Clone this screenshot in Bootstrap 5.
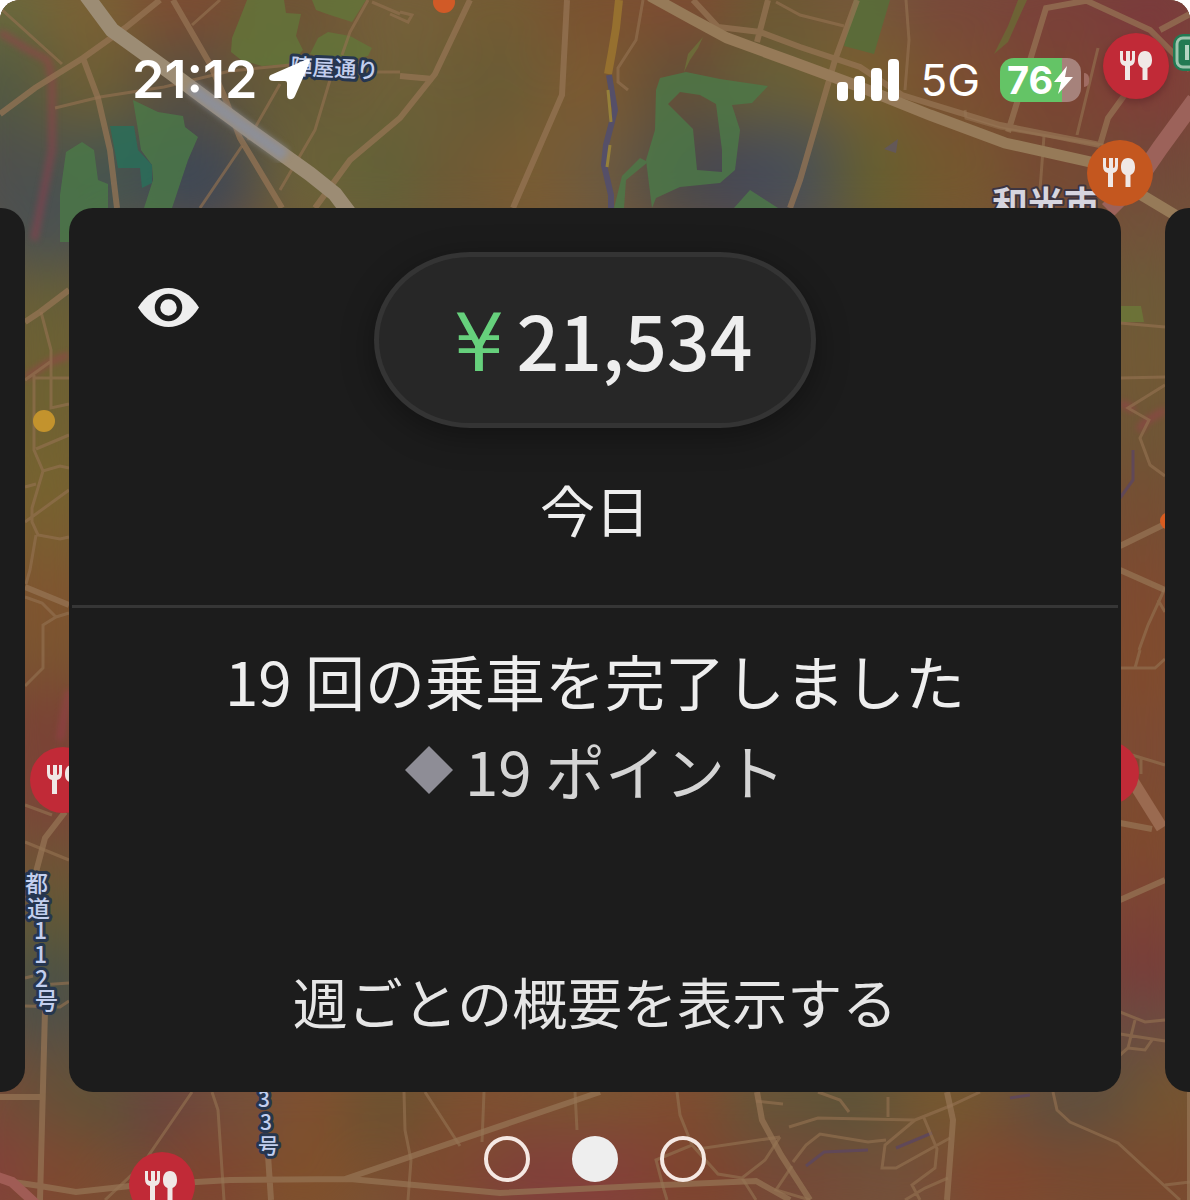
<!DOCTYPE html>
<html lang="ja">
<head>
<meta charset="utf-8">
<meta name="viewport" content="width=device-width, initial-scale=1">
<title>今日の売り上げ</title>
<link rel="stylesheet" href="https://cdn.jsdelivr.net/npm/bootstrap@5.3.0/dist/css/bootstrap.min.css">
<style>
  body { background: #fff; font-family: "Noto Sans CJK JP", sans-serif; }
  .screen { min-height: 1200px; background: #75553a; border-radius: 20px 20px 0 0; isolation: isolate; }
  .map-layer { position: absolute; inset: 0; width: 100%; height: 100%; z-index: -1; }
  .map-text { font-family: "Noto Sans CJK JP", sans-serif; fill: #c3cfee; stroke: #26364f; stroke-width: 6px; stroke-linejoin: round; paint-order: stroke; font-weight: 500; }
  .map-city { font-weight: 700; fill: #d6d5df; stroke: #3e3540; stroke-width: 4px; }
  .status { height: 208px; padding: 50px 101px 0 132px; font-family: Inter, sans-serif; color: #fff; line-height: 60px; }
  .clock { font-size: 52px; font-weight: 600; }
  .clock-group { gap: 12px; }
  .network { font-size: 44px; margin: 0 20px; }
  .battery { width: 81px; height: 44px; border-radius: 14px; line-height: 44px; font-size: 38px; font-weight: 700; padding-left: 7px; background: linear-gradient(90deg, #64c466 76%, #a6827b 76%); }
  .battery-cap { width: 5px; height: 14px; border-radius: 0 7px 7px 0; background: #a06c62; margin-left: 3px; }
  .slides { gap: 44px; }
  .panel { background: #1c1c1c; color: #eee; border-radius: 24px; }
  .peek { flex: 0 0 25px; }
  .peek-start { border-radius: 0 24px 24px 0; }
  .peek-end { border-radius: 24px 0 0 24px; }
  .summary-top { display: grid; grid-template-columns: 1fr auto 1fr; padding-top: 44px; }
  .eye { margin: 36px 0 0 69px; width: 61px; height: 39px; color: #eee; }
  .amount { width: 442px; height: 176px; padding: 2px 0 0 16px; border: 5px solid #343434; border-radius: 96px / 88px; background: #272727; color: #eee; font-size: 75px; font-weight: 500; line-height: 90px; box-shadow: 0 8px 32px rgba(0, 0, 0, .35); }
  .amount-value { gap: 12px; }
  .yen { font-family: "DejaVu Sans", sans-serif; font-size: 80px; font-weight: 400; color: #66d07c; }
  .day { font-size: 55px; line-height: 80px; padding: 40px 0 57px; font-weight: 400; }
  .rule { height: 3px; margin: 0 3px; background: #363636; opacity: 1; border: 0; }
  .trips { font-size: 60px; line-height: 90px; padding-top: 27px; }
  .points { color: #d4d4d4; gap: 12px; }
  .weekly { font-size: 55px; line-height: 80px; color: #e6e6e6; margin: 145px 0 52px; }
  .pager { gap: 42px; padding-top: 44px; }
  .dot { width: 46px; height: 46px; border: 4px solid #f5e8e3; border-radius: 50%; background: transparent; padding: 0; }
  .dot.active { background: #eee; border-color: #eee; }
</style>
</head>
<body>
<main class="screen position-relative overflow-hidden">
  <svg class="map-layer" viewBox="0 0 1190 1200" preserveAspectRatio="xMidYMin slice" aria-hidden="true">
    <defs>
      <filter id="soft" x="-10%" y="-10%" width="120%" height="120%" color-interpolation-filters="sRGB"><feGaussianBlur stdDeviation="28"/></filter>
      <filter id="edge" color-interpolation-filters="sRGB"><feGaussianBlur stdDeviation="3"/></filter>
      <g id="cutlery">
        <path d="M-15 -15v8q0 6 5 7v14h5v-14q5-1 5-7v-8h-3v8q0 2-2 2v-10h-4v10q-3 0-3-2v-8z" fill="#f0e8e6"/>
        <path d="M10-15c-5 0-7 4-7 9s2 7 4.500 8v12h5v-12c2.500-1 4.500-3 4.500-8s-2-9-7-9z" fill="#f0e8e6"/>
      </g>
    </defs>
    <rect width="1190" height="1200" fill="#75553a"/>
    <g id="heat" filter="url(#soft)"></g>

    <!-- parks -->
    <g fill="#4c7a48" opacity=".8">
      <path d="M247 0L240 18L232 38L231 52L241 60L262 66L290 64L303 50L296 36L301 14L286 13L284 0z" fill="#63763a"/>
      <path d="M312 0L316 10L330 15L352 22L366 0z" fill="#63763a"/>
      <path d="M310 54L318 38L328 32L350 36L372 48L368 56L340 62z" fill="#63763a"/>
      <path d="M133 100L158 112L183 116L185 127L198 137L188 160L178 190L172 208H144L153 180L152 165L141 150L138 130z"/>
      <path d="M110 126H134L138 150L152 165V183L142 188L140 168H118z" fill="#28705a"/>
      <path d="M66 152L82 142L94 150L98 180L108 184V208L70 242H60V195z"/>
      <path d="M660 78L686 72L720 79L768 86L752 103L732 105L740 130L735 170L720 183L680 187L656 198L652 208L646 160L655 130L656 90zM668 104L693 129L697 170L722 172V150L716 104L700 95L680 92z" fill-rule="evenodd"/>
      <path d="M640 158L622 176L614 208H624L626 180L648 162zM750 190L778 208H734z"/>
      <path d="M854 0H890L874 54L844 46z" fill="#55703a"/>
      <path d="M1018 0H1027L1016 24L1008 42L994 54L1008 26z" fill="#6b6a35"/>
      <path d="M1120 306H1141L1144 322H1120z" fill="#6c7838"/>
      <path d="M703 37L688 54L684 72L690 60L698 48z" fill="#6d713a"/>
    </g>
    <!-- water and borders -->
    <g fill="none">
      <path d="M619 0L616 28L612 52L608 74" stroke="#96702f" stroke-width="8"/>
      <path d="M609 75L615 110L606 145L604 165L611 195V208" stroke="#554f68" stroke-width="6"/>
      <path d="M608 90L611 122M610 145L607 167" stroke="#95803a" stroke-width="3"/>
      <path d="M806 1166L824 1152L868 1150M896 1148L932 1133M1010 1098L1030 1095M1120 498L1133 480V450" stroke="#604858" stroke-width="3"/>
      <path d="M884 149L898 139L896 153z" fill="#635858"/>
      <g stroke="#a03c50" stroke-width="7" opacity=".5" filter="url(#edge)">
        <path d="M0 32L25 48L48 60L52 80V150L44 190L34 240M25 378L50 362L69 355M60 740L69 690M1165 410L1148 420L1138 430M1120 403L1135 410"/>
      </g>
    </g>
    <!-- narrow streets -->
    <g fill="none" stroke="#927050" stroke-width="3" opacity=".65">
      <path d="M0 8L62 64M220 0L192 25M55 108L100 97L164 87L230 71L290 65M370 72H400M242 146L200 208M280 84L248 140M330 80L315 130L280 190M400 12L412 15L408 22L390 14M368 0L350 32L342 55M372 2L400 14"/>
      <path d="M643 0L636 40L618 68V82L628 90M776 2L800 15L844 26M906 0L909 40L905 90M1098 48L1077 135M1044 136L1040 190M965 110L966 118L1000 128L1120 148"/>
      <path d="M41 312L51 350V408L69 404M34 375V450L43 471L60 466L69 468M34 378H69M25 380L50 362M36 449L69 435M43 471L32 508V522L38 535L60 539L69 537M25 522L69 490M25 487L36 484M36 535L30 570L26 584M25 597L42 603L56 617L69 613M56 617L43 625V668L25 686M25 805L52 815M25 842L69 860M25 978L33 976M25 1006L60 1007L69 1001M40 985L69 983"/>
      <path d="M1120 323L1165 327M1120 378L1165 377M1165 385L1128 408L1149 420L1140 438L1150 465L1165 476M1165 588L1148 625L1139 650M1158 600L1165 612M1120 668H1155L1165 659M1135 668L1140 650M1132 755L1165 765M1141 758V774M1120 1012L1145 1022L1165 1020M1120 1034L1165 1041M1135 1020L1128 1048L1120 1055M1128 1048L1145 1050L1152 1040"/>
      <path d="M192 1092L142 1165L105 1200M212 1092L218 1110L224 1200M404 1092L405 1130L411 1160L408 1200M425 1092L460 1146M484 1092L482 1142M575 1092L577 1130M677 1092L680 1115L692 1145M698 1149L780 1137M780 1137L765 1160L742 1178L718 1174L692 1145L656 1160L664 1190L667 1200M742 1178L756 1200M756 1101L783 1104M818 1092L840 1100L849 1112M789 1127L818 1118L915 1120M888 1097V1117M915 1120L950 1106L980 1092M915 1120L885 1145L882 1168H896L950 1138M924 1118L937 1149L935 1168L912 1185L920 1200M793 1162L806 1145L820 1134L868 1142L886 1140M792 1166L776 1190L810 1200M905 1200L925 1188L948 1178M1053 1092L1057 1110L1070 1122L1118 1143L1180 1200M1165 1185L1190 1182"/>
    </g>
    <!-- main roads -->
    <g fill="none" stroke="#967455" stroke-width="6" opacity=".72">
      <path d="M0 114L35 88L83 58L125 28L160 0M83 58L98 98L110 150L117 208M173 0L210 64L225 98L240 138L282 208M567 0L562 95L513 208M470 0L435 74L400 118L350 160L315 208M400 76L433 79M693 0L718 27L760 32L800 47L860 67L902 95L1000 125L1100 145M768 0L757 42M857 0L835 60L800 180L790 208M1090 0L1046 8L1008 132M1085 0L1150 30L1190 70M1190 14L1160 30M1100 145L1108 118L1150 60"/>
      <path d="M25 322L40 312L69 290M25 587L69 605M1120 546L1165 524M1120 570L1165 590M1120 900L1165 880M65 812L45 838L36 872M45 1010L40 1200M0 1097H40M0 1180L40 1186L76 1192L130 1186L230 1180L350 1179L500 1193L640 1186L756 1181L790 1200M345 1179L600 1092M268 1155L271 1200M757 1092L762 1120L781 1155L810 1200M947 1092L953 1120L947 1200M1190 1092V1200M1120 823L1152 829"/>
    </g>
    <g fill="none" stroke="#967a58">
      <path d="M650 -4L690 18L727 38L790 61L855 85L930 115L1005 143L1090 162L1130 188L1175 215" stroke-width="11"/>
      <path d="M1132 780L1162 828" stroke-width="12" stroke="#9a6a50"/>
      <path d="M1195 100L1160 148L1138 180L1108 210" stroke-width="17" stroke="#9c625a"/>
      <path d="M-5 1176L12 1182L36 1204" stroke-width="10" stroke="#a05c55"/>
      <path d="M86 -5L112 30L170 72L205 98L250 131L310 174L335 194L350 214" stroke-width="15" stroke="#9c8c74"/>
      <path d="M190 87L250 131L285 156" stroke-width="13" stroke="#8d8f98" filter="url(#edge)"/>
    </g>

    <!-- place names -->
    <text class="map-text" x="290" y="74" font-size="22" transform="rotate(3 290 74)">陣屋通り</text>
    <text class="map-text" font-size="23" x="25 27 34 34 35 35" y="892 917 939 963 987 1009">都道112号</text>
    <text class="map-text" font-size="21" x="258 260 258" y="1107 1130 1153">33号</text>
    <text class="map-text map-city" x="992" y="218" font-size="36">和光市</text>

    <!-- pins -->
    <circle cx="444" cy="2" r="11" fill="#d15a27"/>
    <circle cx="44" cy="421" r="11" fill="#c3932d"/>
    <circle cx="1169" cy="521" r="9" fill="#d85c20"/>
    <rect x="1176" y="37" width="30" height="31" rx="7" fill="#237a53" stroke="#237a53" stroke-width="6"/>
    <rect x="1177" y="38" width="30" height="29" rx="6" fill="none" stroke="#9ec5ae" stroke-width="3"/>
    <path d="M1187 45V60" stroke="#b5d5c3" stroke-width="4"/>
    <circle cx="1136" cy="69" r="34" fill="#5a2528" opacity=".5" filter="url(#edge)"/>
    <circle cx="1136" cy="66" r="33" fill="#c12a37"/><use href="#cutlery" x="1135" y="66"/>
    <circle cx="1120" cy="173" r="33" fill="#c4571f"/><use href="#cutlery" x="1118" y="173"/>
    <circle cx="63" cy="780" r="33" fill="#c12a37"/><use href="#cutlery" x="62" y="780"/>
    <circle cx="1107" cy="773" r="32" fill="#c12a37"/>
    <circle cx="162" cy="1185" r="33" fill="#c12a37"/><use href="#cutlery" x="160" y="1186"/>
  </svg>

  <header class="status d-flex justify-content-between align-items-start">
    <div class="clock-group d-flex align-items-center">
      <time class="clock" datetime="21:12">21:12</time>
      <svg width="44" height="42" viewBox="0 0 44 42" role="img" aria-label="位置情報"><path d="M36 1Q43-2 40 5L26 37Q24 41 20 40Q18 39 18 36V24Q18 22 16 22H5Q0 22 0 19Q0 16 4 15z" fill="#fff"/></svg>
    </div>
    <div class="d-flex align-items-center">
      <svg width="63" height="42" viewBox="0 0 63 42" role="img" aria-label="電波強度"><g fill="#fff"><rect y="23" width="11" height="19" rx="4"/><rect x="17" y="17" width="11" height="25" rx="4"/><rect x="34" y="9" width="11" height="33" rx="4"/><rect x="51" y="0" width="11" height="42" rx="4"/></g></svg>
      <span class="network">5G</span>
      <div class="battery d-flex align-items-center" role="img" aria-label="バッテリー 76% 充電中">76<svg width="20" height="30" viewBox="0 0 20 30" aria-hidden="true"><path d="M14 1L1 17H8L5 29L20 12H12z" fill="#fff"/></svg></div>
      <div class="battery-cap"></div>
    </div>
  </header>

  <div class="slides d-flex align-items-stretch">
    <div class="panel peek peek-start"></div>
    <section class="panel flex-fill d-flex flex-column text-center">
      <div class="summary-top">
        <button class="eye btn p-0 border-0 d-flex" type="button" aria-label="金額を隠す">
          <svg width="61" height="39" viewBox="0 0 61 39" aria-hidden="true"><path d="M0 19.500C16-6.500 45-6.500 61 19.500C45 45.500 16 45.500 0 19.500z" fill="#eee"/><circle cx="30.500" cy="19.500" r="11" fill="#eee" stroke="#1c1c1c" stroke-width="5.500"/></svg>
        </button>
        <button class="amount d-flex align-items-center justify-content-center" type="button"><span class="amount-value d-flex align-items-baseline"><span class="yen">¥</span><span>21,534</span></span></button>
      </div>
      <h1 class="day m-0">今日</h1>
      <hr class="rule">
      <div class="trips">
        <div>19 回の乗車を完了しました</div>
        <div class="points d-flex justify-content-center align-items-center">
          <svg width="48" height="48" viewBox="0 0 48 48" aria-hidden="true"><path d="M24 0L48 24L24 48L0 24z" fill="#8e8d96"/></svg>
          <span>19 ポイント</span>
        </div>
      </div>
      <a class="weekly text-decoration-none" href="#weekly">週ごとの概要を表示する</a>
    </section>
    <div class="panel peek peek-end"></div>
  </div>

  <nav class="pager d-flex justify-content-center" aria-label="スライド">
    <button class="dot" type="button" aria-label="前のスライド"></button>
    <button class="dot active" type="button" aria-label="現在のスライド" aria-current="true"></button>
    <button class="dot" type="button" aria-label="次のスライド"></button>
  </nav>
</main>
<script src="https://cdn.jsdelivr.net/npm/bootstrap@5.3.0/dist/js/bootstrap.bundle.min.js"></script>
<script>
  // Demand colours: each row is a y position followed by x/colour samples.
  const samples = [
    [10, [[0,'6b6a3c'],[100,'7a6235'],[190,'7d4c32'],[290,'6f5435'],[400,'75603a'],[500,'745c33'],[600,'7a5230'],[690,'7e4c32'],[780,'6d5833'],[870,'75583a'],[960,'78483a'],[1060,'7a403a'],[1160,'7a3a3c']]],
    [95, [[0,'525a42'],[100,'6e5f35'],[190,'5a5040'],[290,'655c38'],[400,'6e6038'],[500,'6a5c35'],[600,'7c5a32'],[690,'635038'],[780,'686038'],[870,'78602f'],[960,'7b4f32'],[1060,'7a4533'],[1160,'803e38']]],
    [180, [[0,'4d4f4e'],[70,'52514a'],[120,'47564e'],[200,'3f4855'],[320,'6b6238'],[400,'626238'],[470,'6e5a35'],[550,'7a5c32'],[620,'6c5a40'],[700,'4b4a4a'],[770,'454858'],[820,'4a5056'],[890,'66602f'],[960,'75582f'],[1060,'754a33'],[1160,'72483a']]]
  ];
  const left = [[240,'4a5152'],[320,'686036'],[400,'6e6232'],[490,'75642f'],[560,'7a5e30'],[620,'80542f'],[680,'7a5530'],[740,'7a4235'],[820,'7a4538'],[890,'6e5535'],[950,'5c5838'],[1010,'46504a'],[1060,'555046']];
  const right = [[240,'72523a'],[310,'6c5a38'],[380,'725a35'],[450,'6e5636'],[520,'754e33'],[600,'7e4a30'],[680,'804b2d'],[760,'7d4a33'],[850,'7f4a2d'],[920,'7c4434'],[990,'783c3a'],[1050,'6a4c42']];
  left.forEach(([y, c]) => samples.push([y, [[47, c]]]));
  right.forEach(([y, c]) => samples.push([y, [[1143, c]]]));
  samples.push(
    [1110, [[0,'7a4a36'],[60,'6a5038'],[120,'5f5338'],[185,'68443f'],[250,'74503a'],[330,'80502f'],[400,'6c5230'],[490,'7e5030'],[590,'7a5530'],[690,'7f4d30'],[780,'655638'],[860,'5c5438'],[950,'75582f'],[1050,'68503a'],[1100,'5c5040'],[1180,'755530']]],
    [1185, [[0,'84403c'],[70,'7d4a30'],[200,'7f4530'],[310,'80502c'],[440,'7e4a30'],[540,'80403a'],[610,'84403a'],[700,'7f442f'],[800,'754a38'],[900,'74503a'],[1000,'80482f'],[1100,'784a30'],[1180,'7a4a2f']]]
  );
  const heat = document.getElementById('heat');
  for (const [y, row] of samples) for (const [x, colour] of row) {
    const spot = document.createElementNS('http://www.w3.org/2000/svg', 'circle');
    spot.setAttribute('cx', x);
    spot.setAttribute('cy', y);
    spot.setAttribute('r', 58);
    spot.setAttribute('fill', '#' + colour);
    heat.append(spot);
  }
</script>
</body>
</html>
